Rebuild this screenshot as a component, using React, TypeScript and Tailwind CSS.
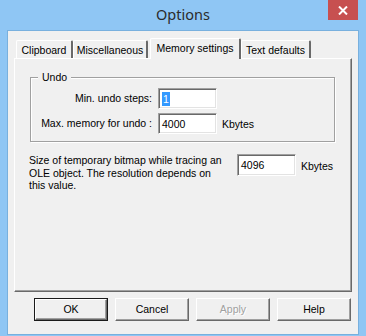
import React from "react";

const ui = { fontFamily: '"Liberation Sans", Arial, sans-serif' };

// classic raised 3D edge used by tabs, panel and buttons
const raised =
  "border-t border-l border-t-white border-l-white border-r border-b border-r-[#696969] border-b-[#696969] shadow-[inset_-1px_-1px_0_#a0a0a0]";

const Tab = ({
  label,
  width,
  active,
  ml,
}: {
  label: string;
  width: string;
  active?: boolean;
  ml: string;
}) => (
  <div
    className={`${ml} ${width} relative flex justify-center rounded-t-[2px] bg-[#f0f0f0] border-t border-l border-t-white border-l-white border-r-2 border-r-[#696969] ${
      active ? "z-10 h-[21px] -mb-[1px] pt-[3px]" : "h-[18px] pt-[3px]"
    }`}
  >
    <span className="leading-[13px]">{label}</span>
  </div>
);

const Field = ({
  value,
  selected,
  className = "",
}: {
  value: string;
  selected?: boolean;
  className?: string;
}) => (
  <div
    className={`w-[59px] h-[21px] bg-white border border-t-[#a0a0a0] border-l-[#a0a0a0] border-r-white border-b-white shadow-[inset_1px_1px_0_#696969,inset_-1px_-1px_0_#e3e3e3] flex items-center pl-[2px] ${className}`}
  >
    {selected ? (
      <span className="bg-[#3399ff] text-white px-[1px] leading-[14px] ml-[1px]">{value}</span>
    ) : (
      <span className="leading-[14px] ml-[1px]">{value}</span>
    )}
  </div>
);

const Button = ({
  label,
  primary,
  disabled,
}: {
  label: string;
  primary?: boolean;
  disabled?: boolean;
}) => (
  <div
    className={`w-[74px] h-[23px] flex items-center justify-center ${
      primary ? "border border-[#1a1a1a]" : ""
    }`}
  >
    <div
      className={`w-full h-full flex items-center justify-center bg-[#f0f0f0] ${raised} ${
        disabled ? "text-[#a0a0a0] [text-shadow:1px_1px_0_#ffffff]" : "text-black"
      }`}
    >
      {label}
    </div>
  </div>
);

export default function App() {
  return (
    <div
      className="w-[366px] h-[336px] bg-[#8fc6f4] flex flex-col overflow-hidden text-[10.5px] text-black"
      style={ui}
    >
      {/* Title bar */}
      <div className="relative h-[31px] flex items-center justify-center">
        <span
          className="text-[14.5px] text-[#2b2b2b] -mt-[1px]"
          style={{ fontFamily: '"Noto Sans", "Open Sans", sans-serif' }}
        >
          Options
        </span>
        <div className="absolute right-[8px] top-0 w-[30px] h-[20px] bg-[#c75050] flex items-center justify-center">
          <svg width="10" height="9" viewBox="0 0 10 9">
            <path d="M1 0.5 L9 8.5 M9 0.5 L1 8.5" stroke="white" strokeWidth="2" />
          </svg>
        </div>
      </div>

      {/* Client area */}
      <div className="mx-[8px] h-[303px] bg-[#f0f0f0] outline outline-1 outline-[#78b0de] flex flex-col px-[6px] pt-[7px]">
        {/* Tabs */}
        <div className="h-[20px] flex items-end">
          <Tab label="Clipboard" width="w-[57px]" ml="ml-[2px]" />
          <Tab label="Miscellaneous" width="w-[75px]" ml="ml-0" />
          <Tab label="Memory settings" width="w-[91px]" ml="ml-[2px]" active />
          <Tab label="Text defaults" width="w-[70px]" ml="ml-0" />
        </div>

        {/* Panel */}
        <div className={`h-[234px] ${raised} flex flex-col`}>
          {/* Undo group */}
          <div className="relative mt-[18px] ml-[15px] w-[305px] h-[65px] border border-[#a0a0a0] shadow-[inset_1px_1px_0_#ffffff,1px_1px_0_#ffffff] flex flex-col pt-[10px] gap-[4px]">
            <span className="absolute -top-[7px] left-[7px] px-[4px] bg-[#f0f0f0] leading-[13px]">
              Undo
            </span>
            <div className="flex items-center">
              <span className="w-[121px] text-right">Min. undo steps:</span>
              <Field value="1" selected className="ml-[6px]" />
            </div>
            <div className="flex items-center">
              <span className="w-[121px] text-right">Max. memory for undo :</span>
              <Field value="4000" className="ml-[6px]" />
              <span className="ml-[5px] mt-[2px]">Kbytes</span>
            </div>
          </div>

          {/* Bitmap size */}
          <div className="flex items-start mt-[12px] ml-[14px]">
            <p className="w-[200px] leading-[12.5px]">
              Size of temporary bitmap while tracing an OLE object. The resolution depends on
              this value.
            </p>
            <Field value="4096" className="ml-[8px] h-[22px]" />
            <span className="ml-[5px] mt-[5px]">Kbytes</span>
          </div>
        </div>

        {/* Buttons */}
        <div className="mt-[6px] flex justify-end gap-[7px] pr-[1px]">
          <Button label="OK" primary />
          <Button label="Cancel" />
          <Button label="Apply" disabled />
          <Button label="Help" />
        </div>
      </div>
    </div>
  );
}
